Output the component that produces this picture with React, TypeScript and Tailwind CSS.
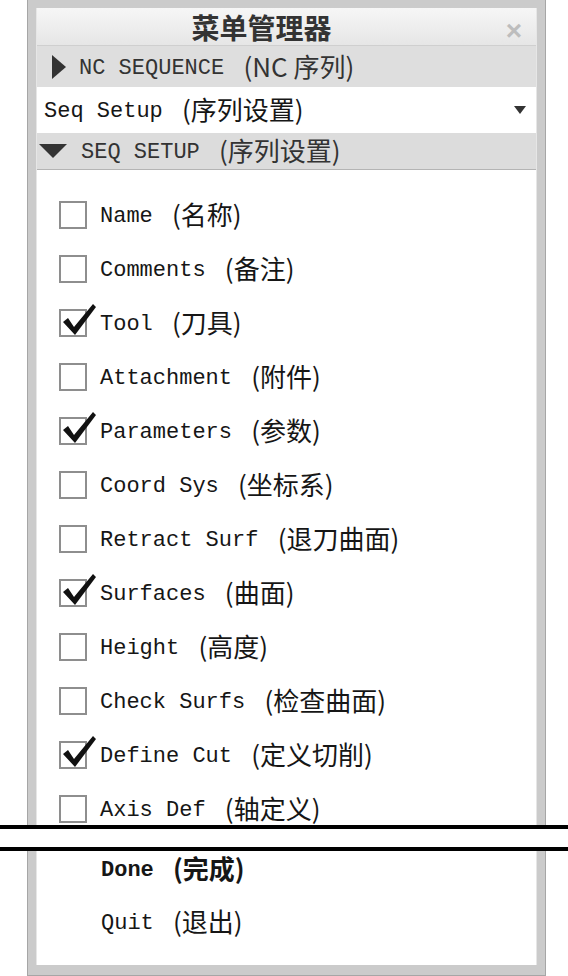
import React from 'react';

const mono = { fontFamily: '"Liberation Mono", "Noto Sans CJK SC", monospace' };
const cjk = { fontFamily: '"Noto Sans CJK SC", sans-serif' };

type Item = { label: string; cn: string; checked?: boolean };

const items: Item[] = [
  { label: 'Name', cn: '名称' },
  { label: 'Comments', cn: '备注' },
  { label: 'Tool', cn: '刀具', checked: true },
  { label: 'Attachment', cn: '附件' },
  { label: 'Parameters', cn: '参数', checked: true },
  { label: 'Coord Sys', cn: '坐标系' },
  { label: 'Retract Surf', cn: '退刀曲面' },
  { label: 'Surfaces', cn: '曲面', checked: true },
  { label: 'Height', cn: '高度' },
  { label: 'Check Surfs', cn: '检查曲面' },
  { label: 'Define Cut', cn: '定义切削', checked: true },
  { label: 'Axis Def', cn: '轴定义' },
];

// english label in mono, chinese part in a CJK face (it reads larger in the original)
const Label = ({ en, cn, bold, color = 'text-[#161616]' }: { en: string; cn: string; bold?: boolean; color?: string }) => (
  <span className={`flex items-center whitespace-pre ${color} ${bold ? 'font-bold' : ''}`}>
    <span className="text-[22px] leading-none relative top-[2px]" style={mono}>{en} </span>
    <span className="ml-[6px] text-[26px] leading-none relative top-[-1px]" style={cjk}>({cn})</span>
  </span>
);

const CheckBox = ({ checked }: { checked?: boolean }) => (
  <div className="relative w-[28px] h-[28px] shrink-0 border-2 border-[#8e8e8e] bg-white">
    {checked && (
      <svg className="absolute left-[1px] top-[-9px]" width="36" height="36" viewBox="0 0 36 36">
        <polygon points="1,20 6,16 12,25 31,2 34,5 13,33" fill="#111" />
      </svg>
    )}
  </div>
);

const Row = ({ item }: { item: Item }) => (
  <div className="h-[54px] flex items-center pl-[22px]">
    <CheckBox checked={item.checked} />
    <span className="ml-[13px]">
      <Label en={item.label} cn={item.cn} />
    </span>
  </div>
);

export default function App() {
  return (
    <div className="w-[568px] h-[976px] bg-white overflow-hidden flex flex-col">
      {/* upper part of the dialog, cut at the break */}
      <div className="ml-[27px] w-[519px] h-[825px] overflow-hidden bg-[#a6a6a6] px-[1px]">
        <div className="h-full bg-[#cbcbcb] px-[8px] pt-[8px]">
          <div className="h-full bg-white flex flex-col border-l border-r border-[#e6e6e6]">
            {/* title */}
            <div className="h-[38px] shrink-0 relative flex items-center justify-center pr-[50px] bg-gradient-to-b from-[#f6f6f6] to-[#e6e6e6] border-b border-[#cfcfcf]">
              <span className="text-[28px] leading-none font-bold text-[#333]" style={cjk}>
                菜单管理器
              </span>
              <span className="absolute right-[14px] top-[2px] text-[28px] text-[#bdbdbd] font-bold" style={{ fontFamily: '"Liberation Sans", sans-serif' }}>
                ×
              </span>
            </div>
            {/* NC SEQUENCE */}
            <div className="h-[41px] shrink-0 flex items-center bg-[#dedede] pl-[14px]">
              <svg width="15" height="24" viewBox="0 0 15 24">
                <polygon points="1,0 15,12 1,24" fill="#333" />
              </svg>
              <span className="ml-[13px]">
                <Label en="NC SEQUENCE" cn="NC 序列" color="text-[#333]" />
              </span>
            </div>
            {/* dropdown */}
            <div className="h-[46px] shrink-0 flex items-center justify-between bg-white pl-[7px] pr-[10px]">
              <Label en="Seq Setup" cn="序列设置" />
              <svg width="12" height="8" viewBox="0 0 12 8">
                <polygon points="0,0 12,0 6,8" fill="#333" />
              </svg>
            </div>
            {/* SEQ SETUP */}
            <div className="h-[37px] shrink-0 flex items-center bg-[#dcdcdc] pl-[2px] border-b border-[#b4b4b4]">
              <svg width="28" height="14" viewBox="0 0 28 14">
                <polygon points="0,0 28,0 14,14" fill="#333" />
              </svg>
              <span className="ml-[14px]">
                <Label en="SEQ SETUP" cn="序列设置" color="text-[#333]" />
              </span>
            </div>
            {/* options */}
            <div className="flex-1 pt-[18px] bg-white">
              {items.map((it) => (
                <Row key={it.label} item={it} />
              ))}
            </div>
          </div>
        </div>
      </div>

      {/* break mark */}
      <div className="h-[4px] shrink-0 bg-black" />
      <div className="h-[18px] shrink-0 bg-white" />
      <div className="h-[4px] shrink-0 bg-black" />

      {/* lower part of the dialog */}
      <div className="ml-[27px] w-[519px] flex-1 bg-[#a6a6a6] px-[1px] pb-[1px]">
        <div className="h-full bg-[#cbcbcb] px-[8px] pb-[10px]">
          <div className="h-full bg-white flex flex-col pl-[64px] border-l border-r border-[#e6e6e6]">
            <div className="h-[36px] flex items-center">
              <Label en="Done" cn="完成" bold />
            </div>
            <div className="mt-[17px] h-[36px] flex items-center">
              <Label en="Quit" cn="退出" />
            </div>
          </div>
        </div>
      </div>
    </div>
  );
}
